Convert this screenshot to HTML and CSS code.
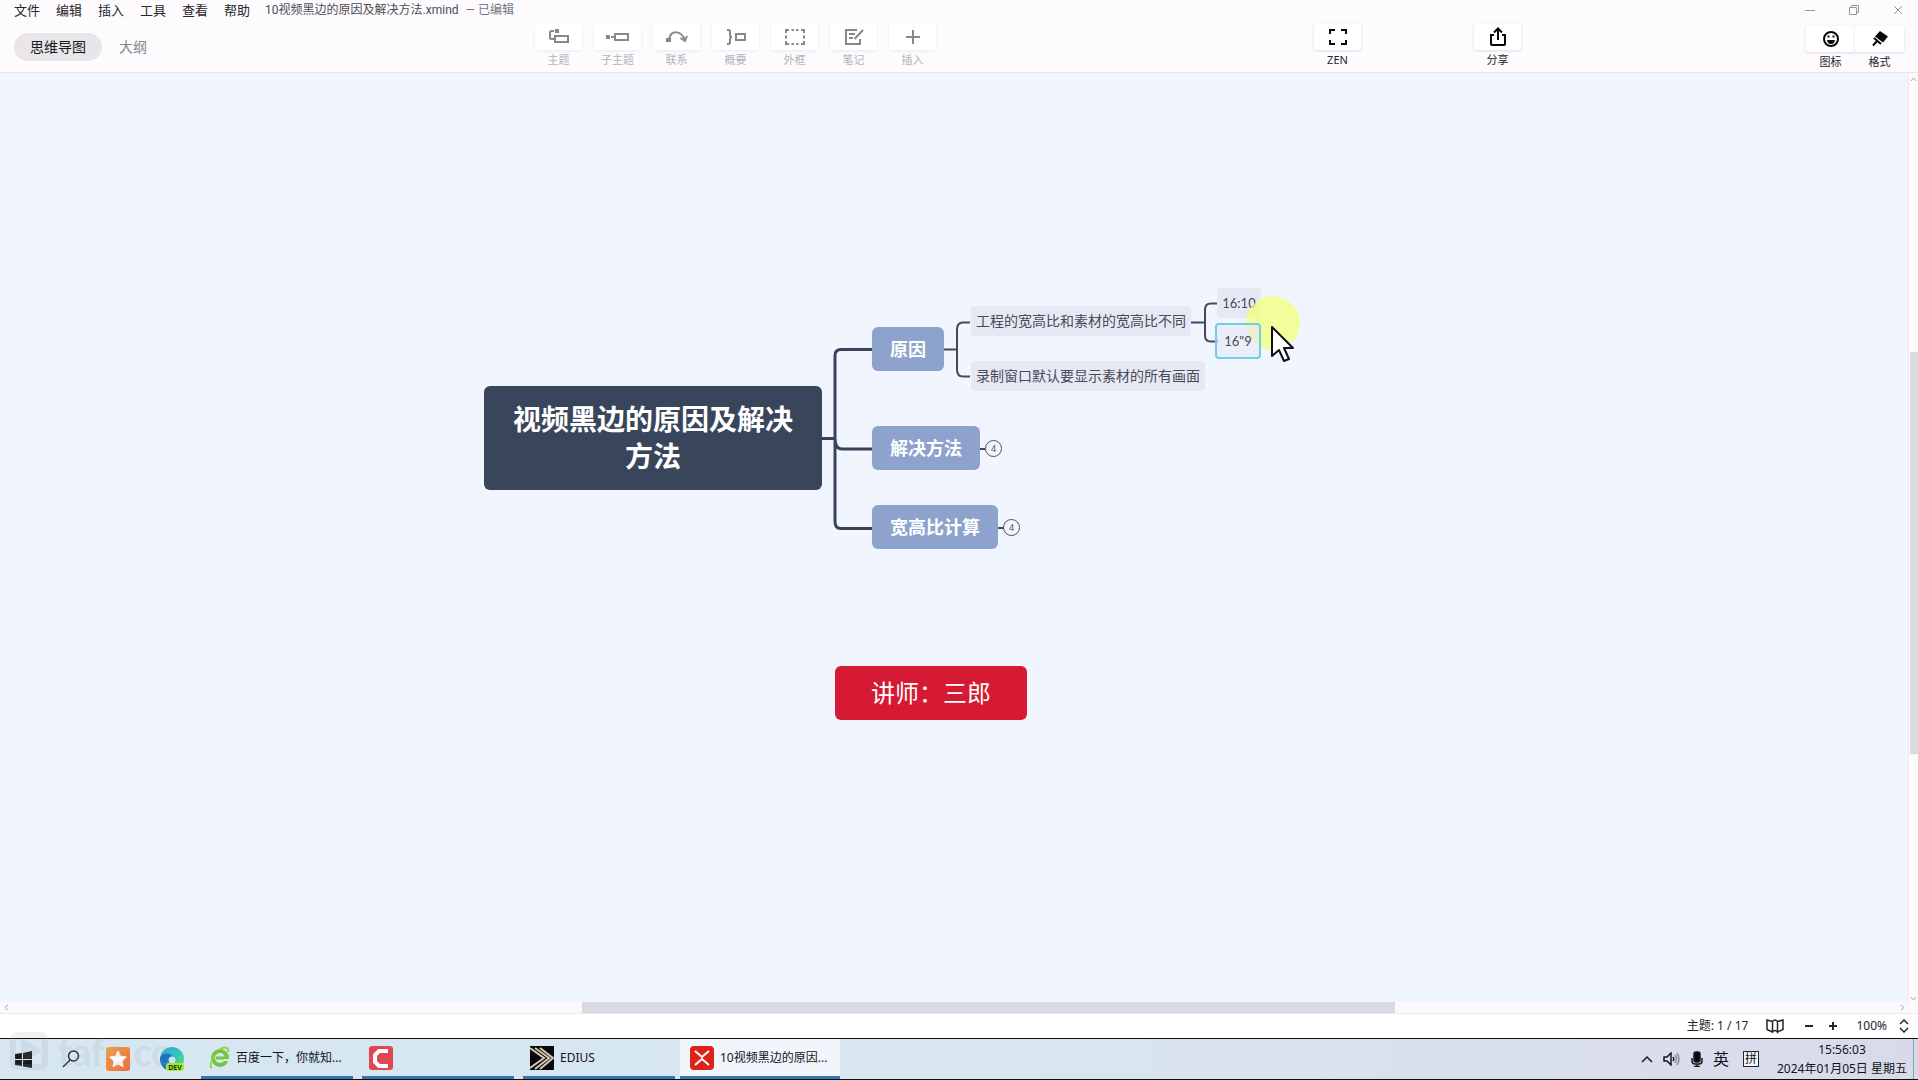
FILE: index.html
```html
<!DOCTYPE html>
<html lang="zh-CN">
<head>
<meta charset="utf-8">
<title>10视频黑边的原因及解决方法.xmind</title>
<link rel="stylesheet" href="styles.css">
</head>
<body>
<header class="header">
  <div class="titlebar">
    <nav class="menu">
      <button>文件</button><button>编辑</button><button>插入</button><button>工具</button><button>查看</button><button>帮助</button>
    </nav>
    <div class="doc"><span>10视频黑边的原因及解决方法.xmind</span><span class="doc-state">— 已编辑</span></div>
    <div class="window-controls">
      <button aria-label="最小化"><svg width="12" height="12" viewBox="0 0 12 12"><path d="M1 6.500h10"/></svg></button>
      <button aria-label="还原"><svg width="12" height="12" viewBox="0 0 12 12"><path d="M1.500 3.500h7v7h-7zM3.500 3.500v-2h7v7h-2"/></svg></button>
      <button aria-label="关闭"><svg width="12" height="12" viewBox="0 0 12 12"><path d="M2 2l8 8M10 2l-8 8"/></svg></button>
    </div>
  </div>
  <div class="toolbar">
    <div class="tabs"><button class="tab tab-on">思维导图</button><button class="tab">大纲</button></div>
    <div class="tools tools-off">
      <button class="tool"><span class="tile"><svg width="24" height="20" viewBox="0 0 24 20"><path d="M7 4H4.500Q3 4 3 5.500v5Q3 12 4.500 12H7M8 9h13v6H8z"/><path class="solid" d="M8 2h4v4H8z"/></svg></span>主题</button>
      <button class="tool"><span class="tile"><svg width="24" height="20" viewBox="0 0 24 20"><path d="M9 7h13v6H9zM5 10h3"/><path class="solid" d="M0 8h4v4H0z"/></svg></span>子主题</button>
      <button class="tool"><span class="tile"><svg width="24" height="20" viewBox="0 0 24 20"><path d="M4 12C6 3 16 3 20 13M15.500 11l4.500 3 2-5"/><path class="solid" d="M1 11h5v4H1z"/></svg></span>联系</button>
      <button class="tool"><span class="tile"><svg width="24" height="20" viewBox="0 0 24 20"><path d="M3 3h1.500Q6 3 6 5v3q0 2 2 2-2 0-2 2v3q0 2-1.500 2H3M12 7h9v6h-9z"/></svg></span>概要</button>
      <button class="tool"><span class="tile"><svg width="24" height="20" viewBox="0 0 24 20"><path d="M3 6V3h3M18 3h3v3M21 14v3h-3M6 17H3v-3M8.500 3h2.500M13 3h2.500M8.500 17h2.500M13 17h2.500M3 8.500v3M21 8.500v3"/></svg></span>外框</button>
      <button class="tool"><span class="tile"><svg width="24" height="20" viewBox="0 0 24 20"><path d="M15 3H4v14h14v-5M7 7h6M7 11h4M12.500 12l8.500-9"/></svg></span>笔记</button>
      <button class="tool"><span class="tile"><svg width="24" height="20" viewBox="0 0 24 20"><path d="M12 3v14M5 10h14"/></svg></span>插入</button>
    </div>
    <div class="tools">
      <button class="tool"><span class="tile"><svg width="20" height="20" viewBox="0 0 20 20"><path d="M2 7V3h5M13 3h5v4M18 13v4h-5M7 17H2v-4"/></svg></span>ZEN</button>
    </div>
    <div class="tools">
      <button class="tool"><span class="tile"><svg width="20" height="20" viewBox="0 0 20 20"><path d="M6 8H3v9q0 1 1 1h12q1 0 1-1V8h-3M10 13V2M6 5.500l4-4 4 4"/></svg></span>分享</button>
    </div>
    <div class="tools panels">
      <button class="tool"><span class="tile"><svg width="20" height="20" viewBox="0 0 20 20"><circle cx="10" cy="10" r="7"/><path class="solid" d="M6 11h8q-.5 4-4 4t-4-4zM6.500 6.500h2v2h-2zM11.500 6.500h2v2h-2z"/></svg></span>图标</button>
      <button class="tool"><span class="tile"><svg width="20" height="20" viewBox="0 0 20 20"><path class="solid" d="M10 2l8 5.500-5 6-8-6z"/><path d="M4 9l7 6M7.500 11.500L3 16.500"/></svg></span>格式</button>
    </div>
  </div>
</header>

<main class="workspace">
  <section class="canvas" aria-label="思维导图">
    <svg class="links" width="1300" height="520" viewBox="0 0 1300 520">
      <g class="thick"><path d="M822 365.500h13M872 276.500h-31q-6 0-6 6v166q0 7 6 7h31M835 365q0 11 7 11h30"/></g>
      <g class="thin"><path d="M944 276.500h13M970 249.500h-7q-6 0-6 7v40q0 7 6 7h7M1191 249.500h14M1218 230.500h-7q-6 0-6 6v26q0 6 6 6h7M980 376h6M998 455h6"/></g>
    </svg>
    <div class="node root">视频黑边的原因及解决方法</div>
    <div class="node branch n-cause">原因</div>
    <div class="node branch n-fix">解决方法</div>
    <div class="node branch n-calc">宽高比计算</div>
    <button class="fold f-fix">4</button>
    <button class="fold f-calc">4</button>
    <div class="node leaf n-ratio">工程的宽高比和素材的宽高比不同</div>
    <div class="node leaf n-window">录制窗口默认要显示素材的所有画面</div>
    <div class="node leaf num n-1610">16:10</div>
    <div class="halo"></div>
    <div class="node leaf num n-169">16"9</div>
    <div class="node teacher">讲师：三郎</div>
    <svg class="pointer" width="26" height="40" viewBox="0 0 26 40"><path d="M2 2v29l7-6 5 11 5-2-5-11h9z"/></svg>
  </section>
  <div class="vscroll"><svg width="7" height="5" viewBox="0 0 7 5"><path d="M1 4l2.500-3L6 4"/></svg><div class="vthumb-area"><div class="vthumb"></div></div><svg width="7" height="5" viewBox="0 0 7 5"><path d="M1 1l2.500 3L6 1"/></svg></div>
  <div class="hscroll"><svg width="5" height="7" viewBox="0 0 5 7"><path d="M4 1L1 3.500 4 6"/></svg><div class="hthumb-area"><div class="hthumb"></div></div><svg width="5" height="7" viewBox="0 0 5 7"><path d="M1 1l3 2.500L1 6"/></svg></div>
</main>

<footer class="status">
  <span class="count">主题: 1 / 17</span>
  <button class="map" aria-label="导航图"><svg width="18" height="16" viewBox="0 0 18 16"><path d="M1 2l5.500 1.500v10.500L1 11.500zM6.500 3.500q2.500-3 5 0v10.500q-2.500-3-5 0M17 2l-5.500 1.500v10.500l5.500-2.500z"/></svg></button>
  <button class="zoom" aria-label="缩小"><svg width="10" height="10" viewBox="0 0 10 10"><path d="M1 5h8"/></svg></button>
  <button class="zoom plus" aria-label="放大"><svg width="10" height="10" viewBox="0 0 10 10"><path d="M1 5h8M5 1v8"/></svg></button>
  <button class="percent">100%<svg width="10" height="14" viewBox="0 0 10 14"><path d="M1 5l4-4 4 4M1 9l4 4 4-4"/></svg></button>
</footer>

<footer class="taskbar">
  <button class="sys start" aria-label="开始"><svg width="17" height="17" viewBox="0 0 17 17"><path d="M0 3l7-1v6H0zM8 2l9-2v8H8zM0 9h7v6l-7-1zM8 9h9v8l-9-1.500z"/></svg></button>
  <button class="sys" aria-label="搜索"><svg width="18" height="18" viewBox="0 0 18 18" fill="none" stroke="#2a3036" stroke-width="1.500"><circle cx="11.500" cy="6" r="5"/><path d="M8 10l-7 7"/></svg></button>
  <button class="sys" aria-label="收藏"><svg width="24" height="24" viewBox="0 0 24 24"><defs><linearGradient id="o" x2="1" y2="1"><stop stop-color="#f2a03c"/><stop offset="1" stop-color="#ee6d42"/></linearGradient></defs><rect width="24" height="24" rx="3" fill="url(#o)"/><path d="M12 4l2.500 5.200 5.700.8-4.200 4 1 5.700-5-2.700-5 2.700 1-5.700-4.200-4 5.700-.8z" fill="#fff" stroke="#fff" stroke-linejoin="round"/></svg></button>
  <button class="sys" aria-label="Edge Dev"><svg width="24" height="24" viewBox="0 0 24 24"><defs><linearGradient id="e" x2="1" y2="1"><stop stop-color="#2ba8dd"/><stop offset=".5" stop-color="#35c4bd"/><stop offset="1" stop-color="#7bdc55"/></linearGradient></defs><circle cx="12" cy="12" r="12" fill="url(#e)"/><path d="M0 12C0 7 8 4 13 9q-4 1-3 6 1 4 5 6l-2 3Q1 24 0 12z" fill="#2372bd"/><circle cx="12" cy="13" r="3.500" fill="#bfe6f1"/><rect x="6" y="16" width="18" height="8" rx="2" fill="#a4e83c"/><text x="15" y="22.500" font-size="7" font-weight="700" text-anchor="middle" fill="#1c340b">DEV</text></svg></button>
  <button class="app"><svg width="20" height="24" viewBox="0 0 20 24"><circle cx="10" cy="12" r="7" fill="none" stroke="#76c63d" stroke-width="4"/><path d="M6 12h12" stroke="#76c63d" stroke-width="3"/><path d="M14 14h6" stroke="#d9e9f2" stroke-width="2"/><path d="M2 22Q-2 20 5 9M10 3q9-4 8 3" fill="none" stroke="#8dd34c" stroke-width="2"/></svg><span>百度一下，你就知...</span></button>
  <button class="app" aria-label="Camtasia"><svg width="24" height="24" viewBox="0 0 24 24"><rect width="24" height="24" rx="3" fill="#e0474f"/><path d="M19 5h-9L6 9v7l4 4h9" fill="none" stroke="#fff" stroke-width="4"/></svg></button>
  <button class="app"><svg width="24" height="24" viewBox="0 0 24 24"><rect width="24" height="24" fill="#080808"/><path d="M0 2l14 10L0 22M5 2l14 10L5 23M10 2l13 10L10 23" fill="none" stroke="#cfc7b4" stroke-width="2"/></svg><span>EDIUS</span></button>
  <button class="app app-on"><svg width="24" height="24" viewBox="0 0 24 24"><rect width="24" height="24" rx="4" fill="#dc2318"/><path d="M5 5l7 6 7-6M5 19l7-6 7 6" fill="none" stroke="#fff" stroke-width="2"/></svg><span>10视频黑边的原因...</span></button>
  <div class="tray">
    <svg width="12" height="8" viewBox="0 0 12 8"><path d="M1 7l5-5 5 5"/></svg>
    <svg width="18" height="14" viewBox="0 0 18 14"><path d="M1 5h3l4-4v12L4 9H1zM10 5q1.500 2 0 4"/><path d="M12 3q3 4 0 8M14 1q4 6 0 12" opacity=".4"/></svg>
    <svg width="12" height="16" viewBox="0 0 12 16"><rect x="3" y="1" width="6" height="10" rx="2" fill="#08090c"/><path d="M1 7v3q0 3 3 3h4q3 0 3-3V7M6 13v2M3 15.500h6"/></svg>
    <span class="ime">英</span><span class="pinyin">拼</span>
  </div>
  <time class="clock"><span>15:56:03</span><span>2024年01月05日 星期五</span></time>
  <div class="mark"><svg width="38" height="38" viewBox="0 0 38 38"><rect x="3" y="3" width="32" height="32" rx="5"/><path d="M14 11l12 8-12 8z"/></svg>tafe.cc</div>
</footer>
</body>
</html>
```
FILE: styles.css
```css
* { box-sizing: border-box; }
html, body { height: 100%; margin: 0; }
body {
  display: grid;
  grid-template-rows: auto minmax(0, 1fr) auto auto;
  overflow: hidden;
  background: #fff;
  color: #26262b;
  font: 12px/16px "Noto Sans", "Noto Sans CJK SC", sans-serif;
}
button { margin: 0; padding: 0; border: 0; background: none; color: inherit; font: inherit; }
svg { display: block; flex: none; }

.header { height: 73px; background: #fdfbfe; border-bottom: 1px solid #e6e3ee; }
.titlebar { display: flex; align-items: center; height: 20px; padding: 0 14px; }
.menu { display: flex; gap: 16px; font-size: 13px; }
.doc { display: flex; gap: 7px; margin-left: 15px; color: #4c4c52; font-family: Roboto, "Noto Sans CJK SC", sans-serif; }
.doc-state { color: #77777d; }
.window-controls { display: flex; gap: 32px; margin-left: auto; }
.window-controls path { fill: none; stroke: #99979d; }

.toolbar { display: grid; grid-template-columns: 535fr 779fr 160fr 332fr 112fr; padding-top: 4px; }
.tabs { display: flex; align-items: center; gap: 17px; height: 46px; padding: 0 14px; font-size: 14px; }
.tab { color: #88868c; }
.tab-on { height: 28px; padding: 0 16px; border-radius: 14px; background: #e8e6e9; color: #19191c; }
.tools { display: flex; gap: 12px; }
.tool { display: flex; flex-direction: column; align-items: center; gap: 2px; width: 47px; font-size: 11px; white-space: nowrap; }
.tile { display: flex; align-items: center; justify-content: center; width: 100%; height: 26px; border-radius: 2px; background: #fff; box-shadow: 0 1px 3px #dcd9e2; }
.tile svg { fill: none; stroke: #08080a; stroke-width: 2; }
.tile .solid { fill: #08080a; stroke: none; }
.tools-off { color: #b4b2b8; }
.tools-off .tile { box-shadow: 0 1px 3px #ebe8ef; }
.tools-off svg { stroke: #89878d; }
.tools-off .solid { fill: #89878d; }
.panels { gap: 0; padding-top: 2px; }
.panels .tool { width: 49px; }

.workspace { display: grid; grid-template: minmax(0, 1fr) 11px / minmax(0, 1fr) 9px; }
.canvas { position: relative; overflow: hidden; background: #f0f5fe; border-right: 1px solid #eeeaf4; }
.links { position: absolute; left: 0; top: 0; fill: none; }
.thick { stroke: #3a4357; stroke-width: 3; }
.thin { stroke: #434a5b; stroke-width: 2; }
.node { position: absolute; display: flex; align-items: center; justify-content: center; white-space: nowrap; }
.root { left: 484px; top: 313px; width: 338px; height: 104px; padding: 0 28px; border-radius: 6px; background: #39455b; color: #fff; font-size: 28px; font-weight: 700; line-height: 37px; text-align: center; white-space: normal; }
.branch { left: 872px; height: 44px; padding: 0 18px; border-radius: 6px; background: #8da2cc; color: #fff; font-size: 18px; font-weight: 700; }
.n-cause { top: 254px; }
.n-fix { top: 353px; }
.n-calc { top: 432px; }
.fold { position: absolute; width: 17px; height: 17px; border: 1px solid #4e5158; border-radius: 50%; color: #4e5158; font-size: 9px; line-height: 15px; text-align: center; background: #f3f6fc; }
.f-fix { left: 985px; top: 367px; }
.f-calc { left: 1003px; top: 446px; }
.leaf { height: 30px; padding: 0 5px; border-radius: 4px; background: #e6e9f4; color: #474a58; font-size: 14px; }
.n-ratio { left: 971px; top: 233px; }
.n-window { left: 971px; top: 288px; }
.leaf.num { font-family: Lato, sans-serif; font-size: 13px; }
.n-1610 { left: 1217px; top: 215px; width: 44px; }
.n-169 { left: 1215px; top: 250px; width: 46px; height: 36px; border: 2px solid #72cdea; background: #e6e9f499; }
.teacher { left: 835px; top: 593px; width: 192px; height: 54px; border-radius: 6px; background: #d61a33; color: #fff; font-size: 24px; }
.halo { position: absolute; left: 1246px; top: 223px; width: 54px; height: 54px; border-radius: 50%; background: #f3ff7a; opacity: .75; }
.pointer { position: absolute; left: 1270px; top: 252px; fill: #fff; stroke: #101014; stroke-width: 2; stroke-linejoin: round; }

.vscroll, .hscroll { display: flex; align-items: center; justify-content: space-between; background: #fbf9fe; }
.vscroll { flex-direction: column; grid-row: 1 / 3; grid-column: 2; padding: 4px 0 12px; background: #fdfcf9; }
.hscroll { grid-row: 2; grid-column: 1; padding: 0 4px; }
.vscroll path, .hscroll path { fill: none; stroke: #aaa8ae; }
.vthumb-area { flex: 1; align-self: stretch; padding-left: 1px; }
.vthumb { height: 44%; background: #dadae0; }
.vthumb-area::before { content: ""; display: block; height: 29.5%; }
.hthumb-area { flex: 1; align-self: stretch; }
.hthumb { width: 43%; height: 100%; margin-left: 30.3%; background: #dbdae2; }

.status { display: flex; align-items: center; justify-content: flex-end; height: 25px; padding-right: 9px; border-top: 1px solid #ebe9ee; background: #fff; }
.status svg { fill: none; stroke: #26262b; stroke-width: 2; }
.count { padding-right: 18px; }
.map { padding-right: 20px; }
.map svg { stroke-width: 1.5; }
.plus { margin: 0 18px 0 14px; }
.percent { display: flex; align-items: center; gap: 12px; }
.percent svg { stroke-width: 1.5; }

.taskbar { position: relative; display: flex; height: 42px; border: solid #0c0e12; border-width: 1px 0; background: linear-gradient(90deg, #d6e7f1 0%, #d8e7f1 50%, #dadfec 80%, #d8daea 100%); color: #111418; }
.sys { display: flex; align-items: center; justify-content: center; width: 50px; }
.start { width: 46px; }
.start svg { fill: #17191c; }
.sys:nth-child(3) { width: 44px; }
.sys:nth-child(4) { width: 64px; }
.app { display: flex; align-items: center; gap: 6px; width: 152px; margin-left: 9px; padding: 0 7px; border-bottom: 3px solid #3277ae; white-space: nowrap; }
.sys + .app { margin-left: -3px; padding-left: 9px; }
.app-on { width: 160px; margin-left: 5px; padding: 0 10px; background: #f1f6fd; }
.tray { display: flex; align-items: center; gap: 10px; margin-left: auto; }
.tray svg { fill: none; stroke: #17191d; stroke-width: 1.500; }
.ime { font-size: 16px; }
.pinyin { width: 16px; height: 16px; margin-left: 4px; border: 1px solid #25262c; background: #f4f5fb; line-height: 14px; text-align: center; }
.clock { display: flex; flex-direction: column; justify-content: center; gap: 3px; margin: 0 4px 0 18px; padding-right: 6px; border-right: 1px solid #8aa1b0; text-align: center; }
.mark { position: absolute; left: 10px; bottom: 8px; display: flex; align-items: center; gap: 10px; height: 40px; color: #9a9ea2; font: 700 38px/40px Lato, sans-serif; opacity: .15; pointer-events: none; }
.mark svg { fill: none; stroke: #9a9ea2; stroke-width: 6; }
```
